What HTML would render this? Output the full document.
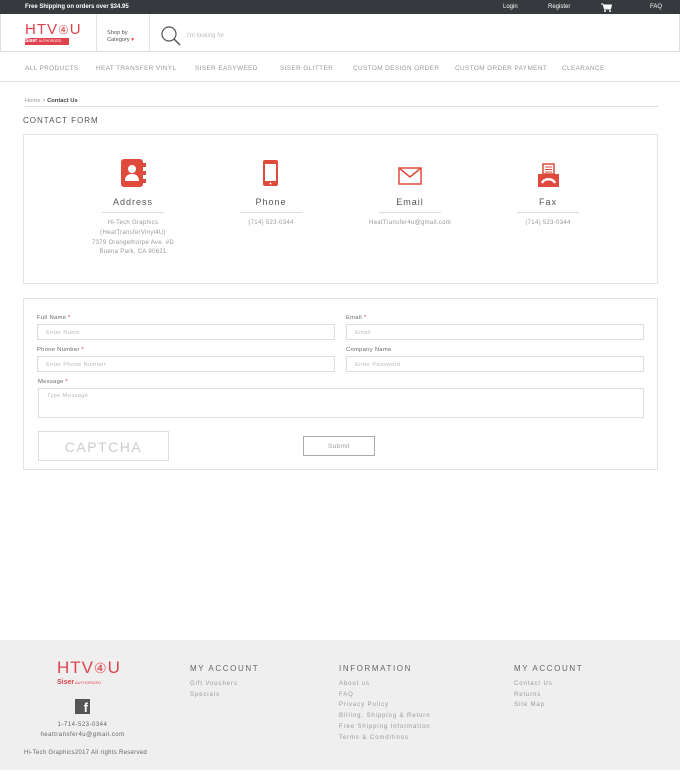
<!DOCTYPE html>
<html><head><meta charset="utf-8"><style>
*{margin:0;padding:0;box-sizing:border-box}
body{width:680px;height:782px;background:#fff;font-family:"Liberation Sans",sans-serif;position:relative;overflow:hidden;color:#888}
.a{position:absolute;white-space:nowrap}
.top{left:0;top:0;width:680px;height:14px;background:#36393e}
.top span{position:absolute;top:4px;font-size:6px;color:#fff}
.nav span{position:absolute;font-size:6.4px;color:#999;letter-spacing:.4px}
.box{position:absolute;border:1px solid #e3e3e3}
.ic{position:absolute;top:158px}
.t{position:absolute;top:197px;font-size:9px;color:#555;letter-spacing:1px;text-align:center;width:120px}
.ln{position:absolute;top:212px;height:1px;width:62px;background:#ddd}
.d{position:absolute;top:219px;font-size:6px;color:#999;text-align:center;width:140px;line-height:9.8px;letter-spacing:.3px}
.lb{position:absolute;font-size:5.8px;color:#666;letter-spacing:.3px}
.lb b{color:#d33;font-weight:normal}
.in{position:absolute;border:1px solid #ddd;font-size:5.8px;color:#bbb;padding:5px 8px;letter-spacing:.3px}
.fh{position:absolute;top:664px;font-size:8px;color:#666;letter-spacing:1.6px}
.fl{position:absolute;font-size:6px;color:#999;letter-spacing:.9px;line-height:10.7px}
</style></head><body>
<div class="a top"><span style="left:25px;font-weight:bold">Free Shipping on orders over $34.95</span><span style="left:503px">Login</span><span style="left:548px">Register</span><span style="left:650px">FAQ</span>
<svg style="position:absolute;left:601px;top:3px" width="11" height="9" viewBox="0 0 11 9"><path d="M0 1h2l1.5 5h6l1-4H3" fill="#fff" stroke="#fff" stroke-width="1"/><circle cx="4" cy="8" r="1" fill="#fff"/><circle cx="9" cy="8" r="1" fill="#fff"/></svg></div>
<div class="a" style="left:0;top:14px;width:680px;height:38px;border:1px solid #ddd;border-top:none"></div>
<div class="a" style="left:25px;top:23px;font-size:15px;color:#e0434d;letter-spacing:1px;line-height:14px">HTV<span style="font-size:12px">④</span>U</div>
<div class="a" style="left:25px;top:38px;width:44px;height:7px;background:#e0434d;font-size:5px;color:#fff;line-height:7px;font-weight:bold">Siser <span style="font-weight:normal;font-size:3.5px">AUTHORIZED</span></div>
<div class="a" style="left:96px;top:14px;width:1px;height:38px;background:#e3e3e3"></div>
<div class="a" style="left:149px;top:14px;width:1px;height:38px;background:#e3e3e3"></div>
<div class="a" style="left:107px;top:30px;font-size:5.6px;color:#555;line-height:7px">Shop by<br>Category <span style="color:#d33">▾</span></div>
<svg class="a" style="left:160px;top:25px" width="22" height="22" viewBox="0 0 22 22"><circle cx="9" cy="9" r="7" fill="none" stroke="#555" stroke-width="1.2"/><path d="M14 14l6 6" stroke="#555" stroke-width="1.5"/></svg>
<div class="a" style="left:187px;top:33px;font-size:6px;color:#bbb">I'm looking for</div>
<div class="a nav" style="left:0;top:52px;width:680px;height:30px;border-bottom:1px solid #ddd">
<span style="left:25px;top:13px">ALL PRODUCTS</span><span style="left:96px;top:13px">HEAT TRANSFER VINYL</span><span style="left:195px;top:13px">SISER EASYWEED</span><span style="left:280px;top:13px">SISER GLITTER</span><span style="left:353px;top:13px">CUSTOM DESIGN ORDER</span><span style="left:455px;top:13px">CUSTOM ORDER PAYMENT</span><span style="left:562px;top:13px">CLEARANCE</span></div>
<div class="a" style="left:25px;top:98px;font-size:5.8px;color:#999">Home &gt; <span style="color:#444;font-weight:bold">Contact Us</span></div>
<div class="a" style="left:25px;top:106px;width:633px;height:1px;background:#ddd"></div>
<div class="a" style="left:23px;top:116px;font-size:8px;color:#555;letter-spacing:1px">CONTACT FORM</div>
<div class="box" style="left:23px;top:134px;width:635px;height:150px"></div>
<svg class="ic" style="left:120px" width="27" height="30" viewBox="0 0 27 30"><rect x="1" y="1" width="22" height="28" rx="3" fill="#e04a3c"/><rect x="23" y="5" width="3" height="4" fill="#e04a3c"/><rect x="23" y="13" width="3" height="4" fill="#e04a3c"/><rect x="23" y="21" width="3" height="4" fill="#e04a3c"/><circle cx="12" cy="11" r="4" fill="#fff"/><path d="M5 23c0-5 3-7 7-7s7 2 7 7z" fill="#fff"/></svg>
<svg class="ic" style="left:263px" width="16" height="30" viewBox="0 0 16 30"><rect x="0" y="2" width="15" height="26" rx="2" fill="#e04a3c"/><rect x="2" y="6" width="11" height="17" fill="#fff"/><circle cx="7.5" cy="25.5" r="1" fill="#fff"/></svg>
<svg class="ic" style="left:398px;top:167px" width="24" height="18" viewBox="0 0 24 18"><rect x="1" y="1" width="22" height="16" fill="none" stroke="#e04a3c" stroke-width="1.5"/><path d="M1 1l11 9 11-9" fill="none" stroke="#e04a3c" stroke-width="1.5"/></svg>
<svg class="ic" style="left:537px;top:163px" width="23" height="25" viewBox="0 0 23 25"><rect x="6" y="1" width="11" height="10" fill="none" stroke="#e04a3c" stroke-width="1.5"/><path d="M8 4h7M8 6.5h7M8 9h7" stroke="#e04a3c"/><rect x="1" y="11" width="21" height="13" fill="#e04a3c"/><path d="M5 20c2-5 11-5 13 0" stroke="#fff" stroke-width="2.5" fill="none"/></svg>
<div class="t" style="left:73px">Address</div><div class="t" style="left:211px">Phone</div><div class="t" style="left:350px">Email</div><div class="t" style="left:488px">Fax</div>
<div class="ln" style="left:102px"></div><div class="ln" style="left:240px"></div><div class="ln" style="left:379px"></div><div class="ln" style="left:517px"></div>
<div class="d" style="left:63px">Hi-Tech Graphics<br>(HeatTransferVinyl4U)<br>7379 Orangethorpe Ave. #D<br>Buena Park, CA 90621</div>
<div class="d" style="left:201px">(714) 523-0344</div>
<div class="d" style="left:340px">HeatTransfer4u@gmail.com</div>
<div class="d" style="left:478px">(714) 523-0344</div>
<div class="box" style="left:23px;top:298px;width:635px;height:172px"></div>
<div class="lb" style="left:37px;top:315px">Full Name <b>*</b></div>
<div class="lb" style="left:346px;top:315px">Email <b>*</b></div>
<div class="in" style="left:37px;top:324px;width:298px;height:16px">Enter Name</div>
<div class="in" style="left:346px;top:324px;width:298px;height:16px">Email</div>
<div class="lb" style="left:37px;top:347px">Phone Number <b>*</b></div>
<div class="lb" style="left:346px;top:347px">Company Name</div>
<div class="in" style="left:37px;top:356px;width:298px;height:16px">Enter Phone Number</div>
<div class="in" style="left:346px;top:356px;width:298px;height:16px">Enter Password</div>
<div class="lb" style="left:38px;top:379px">Message <b>*</b></div>
<div class="in" style="left:38px;top:388px;width:606px;height:30px;padding-top:4px">Type Message</div>
<div class="in" style="left:38px;top:431px;width:131px;height:30px;font-size:14px;color:#ccc;text-align:center;letter-spacing:1.5px;padding-top:7px">CAPTCHA</div>
<div class="in" style="left:303px;top:436px;width:72px;height:20px;border-color:#aaa;color:#999;text-align:center;font-size:6.5px;padding-top:6px">Submit</div>
<div class="a" style="left:0;top:640px;width:680px;height:130px;background:#efefef"></div>
<div class="a" style="left:57px;top:660px;font-size:17px;color:#e0434d;letter-spacing:1px;line-height:16px">HTV<span style="font-size:14px">④</span>U</div>
<div class="a" style="left:57px;top:678px;width:60px;height:10px;font-size:7px;color:#e0434d;font-weight:bold;line-height:10px">Siser<span style="font-size:4px;font-weight:normal"> AUTHORIZED</span></div>
<div class="a" style="left:75px;top:699px;width:15px;height:15px;background:#555;color:#fff;font-size:13px;font-weight:bold;text-align:right;padding-right:2px;line-height:17px">f</div>
<div class="a" style="left:40px;top:720px;width:85px;text-align:center;font-size:6px;color:#666;line-height:10px;letter-spacing:.5px">1-714-523-0344<br>heattransfer4u@gmail.com</div>
<div class="a" style="left:24px;top:750px;font-size:6px;color:#666;letter-spacing:.3px">Hi-Tech Graphics2017 All rights Reserved</div>
<div class="fh" style="left:190px">MY ACCOUNT</div><div class="fh" style="left:339px">INFORMATION</div><div class="fh" style="left:514px">MY ACCOUNT</div>
<div class="fl" style="left:190px;top:679px">Gift Vouchers<br>Specials</div>
<div class="fl" style="left:339px;top:679px">About us<br>FAQ<br>Privacy Policy<br>Billing, Shipping &amp; Return<br>Free Shipping Information<br>Terms &amp; Comditinos</div>
<div class="fl" style="left:514px;top:679px">Contact Us<br>Returns<br>Site Map</div>
</body></html>
